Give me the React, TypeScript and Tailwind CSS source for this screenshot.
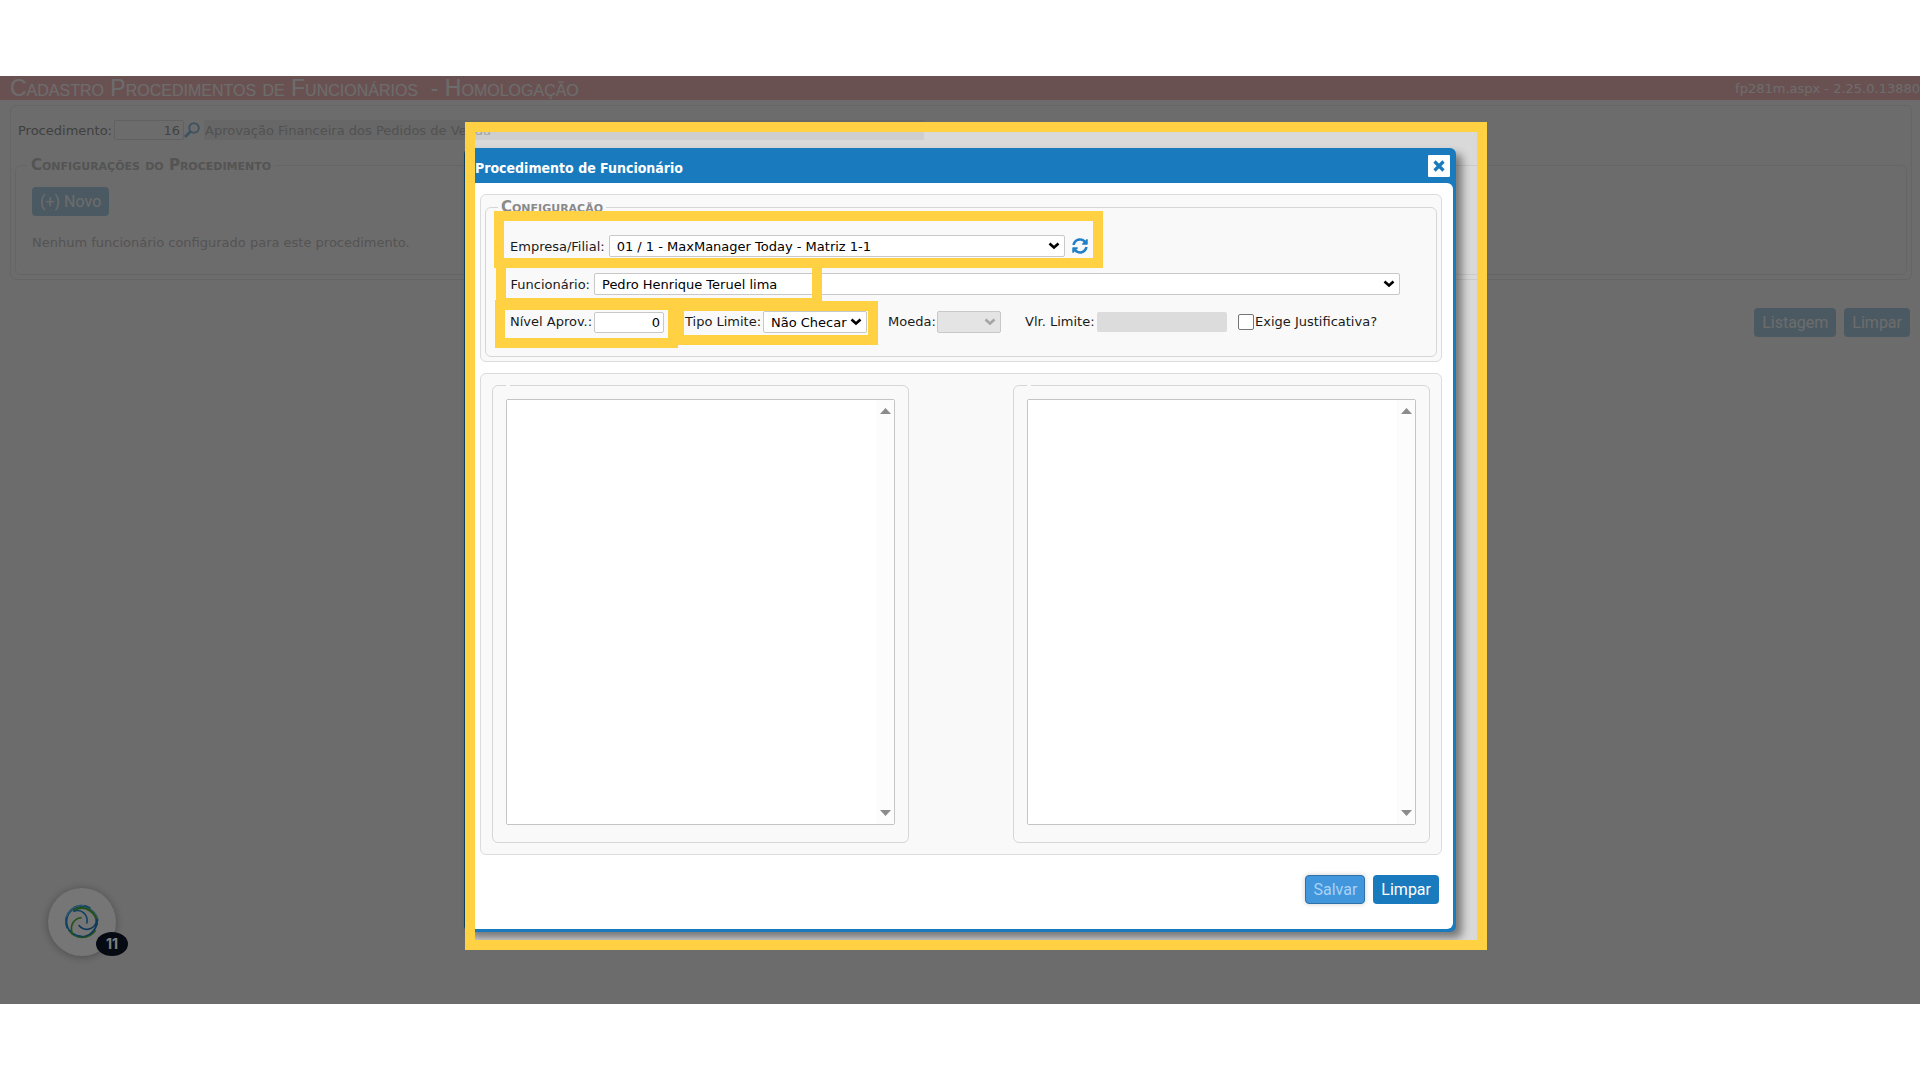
import type { ReactNode, SelectHTMLAttributes } from "react";

function Highlight({ className }: { className: string }) {
  return (
    <span
      aria-hidden="true"
      className={`pointer-events-none absolute border-10 border-[#ffd143] ${className}`}
    />
  );
}

type DropdownProps = SelectHTMLAttributes<HTMLSelectElement> & { box: string; text?: string };

function Dropdown({ box, text, disabled, ...rest }: DropdownProps) {
  return (
    <span className={`relative flex h-[22px] items-center ${box}`}>
      <select
        disabled={disabled}
        className="h-full w-full appearance-none rounded-xs border border-[#c8c8c8] bg-white pt-px pr-4 pl-[7px] text-black disabled:bg-[#e4e4e4]"
        {...rest}
      >
        <option>{text ?? ""}</option>
      </select>
      <svg
        viewBox="0 0 12 8"
        className={`pointer-events-none absolute right-[5px] h-2 w-3 ${disabled ? "text-[#a5a5a5]" : "text-black"}`}
        fill="none"
        stroke="currentColor"
        strokeWidth="2.6"
      >
        <path d="M1.500 1.500 6 5.500l4.500-4" />
      </svg>
    </span>
  );
}

function ListPanel({ label }: { label: string }) {
  return (
    <fieldset className="min-w-0 rounded-md border border-[#d6d6d6] px-[13px] pt-3 pb-[17px]">
      <legend className="h-1 w-1" />
      <div className="flex h-[426px] rounded-xs border border-[#c4c4c4] bg-white">
        <select multiple aria-label={label} className="min-w-0 flex-1 appearance-none bg-white" />
        <div className="flex w-[18px] flex-col items-center justify-between bg-[#fcfcfc] py-2 text-[#8b8b8b]">
          <svg viewBox="0 0 11 6" className="h-[6px] w-[11px]" fill="currentColor">
            <path d="M5.5 0 11 6H0z" />
          </svg>
          <svg viewBox="0 0 11 6" className="h-[6px] w-[11px]" fill="currentColor">
            <path d="M5.5 6 0 0h11z" />
          </svg>
        </div>
      </div>
    </fieldset>
  );
}

function FadedButton({ children }: { children: ReactNode }) {
  return (
    <button className="h-[29px] rounded-sm bg-[#b0d3e8] px-2 font-[Roboto,sans-serif] text-base leading-none text-white">
      {children}
    </button>
  );
}

function Background() {
  return (
    <div className="text-[#c6c6c6]">
      <header className="flex h-6 items-center justify-between bg-[#fabfbf] text-white">
        <h1 className="pl-[10px] font-['Liberation_Sans',sans-serif] text-[23px] leading-6 whitespace-pre [font-variant:small-caps]">
          {"Cadastro Procedimentos de Funcionários  - Homologação"}
        </h1>
        <span className="pt-0.5 text-[13px]">fp281m.aspx - 2.25.0.13880</span>
      </header>
      <section className="mt-[5px] mr-2 ml-[10px] rounded-md border border-[#eeeeee] px-1 pt-[14px] pb-1">
        <div className="flex h-5 items-center pl-[3px]">
          <label htmlFor="procedimento" className="w-24 pt-0.5 text-[#979797]">
            Procedimento:
          </label>
          <input
            id="procedimento"
            defaultValue="16"
            className="h-5 w-[70px] rounded-xs border border-[#e6e6e6] pr-[3px] text-right text-[#a0a0a0]"
          />
          <button aria-label="Pesquisar" className="h-4 w-4 text-[#93c3e2]">
            <svg viewBox="0 0 16 16" fill="none" stroke="currentColor" strokeWidth="2">
              <circle cx="10" cy="6" r="4.8" />
              <path d="M6.5 9.5 1 15" strokeWidth="2.8" />
            </svg>
          </button>
          <input
            readOnly
            aria-label="Descrição"
            defaultValue="Aprovação Financeira dos Pedidos de Venda"
            className="ml-1 h-5 w-[720px] bg-[#f3f3f3] pl-px text-[#c1c1c1]"
          />
        </div>
        <fieldset className="mt-[17px] rounded-md border border-[#eeeeee] px-4 pb-5">
          <legend className="-ml-[5px] px-1 text-[15px] leading-4 font-bold [font-variant:small-caps]">
            Configurações do Procedimento
          </legend>
          <div className="pt-[14px]">
            <FadedButton>(+) Novo</FadedButton>
          </div>
          <p className="mt-4 bg-white/30 leading-[22px]">
            Nenhum funcionário configurado para este procedimento.
          </p>
        </fieldset>
      </section>
      <div className="mt-[28px] flex justify-end gap-2 pr-[10px]">
        <FadedButton>Listagem</FadedButton>
        <FadedButton>Limpar</FadedButton>
      </div>
    </div>
  );
}

function AssistantBubble() {
  return (
    <button
      aria-label="Assistente, 11 mensagens"
      className="absolute bottom-12 left-12 flex h-17 w-17 items-center justify-center rounded-full bg-[#ececec] shadow-[0_1px_8px_rgba(0,0,0,0.3)]"
    >
      <svg viewBox="0 0 110 110" className="h-9 w-9" fill="none" strokeLinecap="round">
        <path d="M10 72A48 48 0 0 1 78 12" stroke="#1f86c4" strokeWidth="7" />
        <path d="M5 58A50 50 0 0 1 60 5" stroke="#7cc0e0" strokeWidth="3" />
        <path d="M32 18A46 46 0 0 1 100 62" stroke="#45a535" strokeWidth="7" />
        <path d="M62 8A50 50 0 0 1 105 50" stroke="#3f9fc8" strokeWidth="3" />
        <path d="M100 48A47 47 0 0 1 40 98" stroke="#1f6fb4" strokeWidth="6" />
        <path d="M96 82A50 50 0 0 1 14 80" stroke="#45a535" strokeWidth="4" />
        <path d="M8 42A46 46 0 0 0 50 98" stroke="#1f86c4" strokeWidth="5" />
        <path d="M26 92C16 66 30 44 52 42" stroke="#45a535" strokeWidth="5" />
        <path d="M30 22C54 14 74 32 70 58" stroke="#1f86c4" strokeWidth="5" />
        <path d="M46 66C60 84 88 80 98 58" stroke="#1f6fb4" strokeWidth="5" />
      </svg>
      <span className="absolute -right-3 bottom-0 flex h-6 w-8 items-center justify-center rounded-[50%] bg-[#0d1424] font-[Inter,sans-serif] text-sm font-bold text-white">
        11
      </span>
    </button>
  );
}

function Dialog() {
  return (
    <section
      role="dialog"
      aria-labelledby="dialog-title"
      className="relative mt-18 w-full max-w-[992px] self-start rounded-md border-3 border-[#197bbe] bg-[#197bbe] shadow-[6px_6px_8px_rgba(0,0,0,0.45)]"
    >
      <header className="flex h-8 items-center justify-between pr-[3px] pb-0.5 pl-2">
        <h2
          id="dialog-title"
          className="pt-1 font-['DejaVu_Sans_Condensed','DejaVu_Sans',sans-serif] text-sm font-bold text-white"
        >
          Procedimento de Funcionário
        </h2>
        <button
          aria-label="Fechar"
          className="flex h-[22px] w-[22px] items-center justify-center rounded-[1px] bg-white text-[#197bbe]"
        >
          <svg viewBox="0 0 12 12" className="h-3 w-3" stroke="currentColor" strokeWidth="3.2">
            <path d="m1.5 1.5 9 9M10.500 1.500l-9 9" />
          </svg>
        </button>
      </header>

      <div className="rounded-md bg-white pt-[11px] pr-[11px] pb-[25px] pl-[13px]">
        <div className="rounded-md border border-[#dcdcdc] bg-[#f9f9f9] p-1">
          <fieldset className="rounded-md border border-[#d6d6d6] pt-5 pb-[23px] pl-6">
            <legend className="-ml-3 px-[3px] text-[15px] leading-4 font-bold text-[#8a8a8a] [font-variant:small-caps]">
              Configuração
            </legend>
            <div className="flex flex-col gap-4">
              <div className="relative flex w-[578px] items-center">
                <label htmlFor="empresa" className="mr-1 pt-0.5 whitespace-nowrap">
                  Empresa/Filial:
                </label>
                <Dropdown id="empresa" box="flex-1" text="01 / 1 - MaxManager Today - Matriz 1-1" />
                <button aria-label="Atualizar" className="ml-[7px] h-4 w-4 text-[#1f80c8]">
                  <svg viewBox="0 0 512 512" fill="currentColor">
                    <path d="M370.720 133.280C339.458 104.008 298.888 87.962 255.848 88c-77.458.068-144.328 53.178-162.791 126.850-1.344 5.363-6.122 9.150-11.651 9.150H24.103c-7.498 0-13.194-6.807-11.807-14.176C33.933 94.924 134.813 8 256 8c66.448 0 126.791 26.136 171.315 68.685L463.030 40.970C478.149 25.851 504 36.559 504 57.941V192c0 13.255-10.745 24-24 24H345.941c-21.382 0-32.090-25.851-16.971-40.971l41.750-41.749zM32 296h134.059c21.382 0 32.090 25.851 16.971 40.971l-41.750 41.750c31.262 29.273 71.835 45.319 114.876 45.280 77.418-.070 144.315-53.144 162.787-126.849 1.344-5.363 6.122-9.150 11.651-9.150h57.304c7.498 0 13.194 6.807 11.807 14.176C478.067 417.076 377.187 504 256 504c-66.448 0-126.791-26.136-171.315-68.685L48.970 471.030C33.851 486.149 8 475.441 8 454.059V320c0-13.255 10.745-24 24-24z" />
                  </svg>
                </button>
                <Highlight className="-top-6 -right-[15px] -bottom-[11px] -left-4" />
              </div>

              <div className="relative flex w-[890px] items-center">
                <label htmlFor="funcionario" className="mr-1 w-20 pt-0.5 text-right">
                  Funcionário:
                </label>
                <Dropdown id="funcionario" box="flex-1" text="Pedro Henrique Teruel lima" />
                <Highlight className="-top-[15px] -bottom-[13px] -left-[14px] w-[326px]" />
              </div>

              <div className="flex items-center">
                <div className="relative flex items-center">
                  <label htmlFor="nivel" className="mr-1 w-20 text-right whitespace-nowrap">
                    Nível Aprov.:
                  </label>
                  <input
                    id="nivel"
                    defaultValue="0"
                    className="h-[21px] w-[70px] rounded-xs border border-[#c8c8c8] bg-white pr-[3px] text-right text-black"
                  />
                  <Highlight className="-top-3 -right-[14px] -bottom-[15px] -left-[15px]" />
                </div>
                <div className="relative ml-[21px] flex items-center">
                  <label htmlFor="tipo" className="w-[78px] whitespace-nowrap">
                    Tipo Limite:
                  </label>
                  <Dropdown id="tipo" box="w-[104px]" text="Não Checar" />
                  <Highlight className="-top-[10px] -right-[11px] -bottom-3 -left-[11px]" />
                </div>
                <label htmlFor="moeda" className="ml-[21px] w-[49px]">
                  Moeda:
                </label>
                <Dropdown id="moeda" box="w-16" disabled />
                <label htmlFor="valor" className="ml-6 w-18 whitespace-nowrap">
                  Vlr. Limite:
                </label>
                <input id="valor" disabled className="h-5 w-[130px] rounded-xs bg-[#dcdcdc]" />
                <label className="ml-[11px] flex items-center whitespace-nowrap">
                  <input
                    type="checkbox"
                    className="mr-px h-4 w-4 appearance-none rounded-xs border border-[#767676] bg-white"
                  />
                  Exige Justificativa?
                </label>
              </div>
            </div>
          </fieldset>
        </div>

        <div className="mt-[11px] grid grid-cols-2 gap-26 rounded-md border border-[#dcdcdc] bg-[#f9f9f9] px-[11px] pt-[9px] pb-[11px]">
          <ListPanel label="Disponíveis" />
          <ListPanel label="Selecionados" />
        </div>

        <div className="mt-5 flex justify-end gap-2 pr-[3px] font-[Roboto,sans-serif] text-base">
          <button
            disabled
            className="h-[29px] rounded-sm border border-[#2f72a8] bg-[#4296dc] px-[7px] leading-none text-[#a8d3f5] shadow-[0_0_5px_rgba(0,0,0,0.2)]"
          >
            Salvar
          </button>
          <button className="h-[29px] rounded-sm bg-[#197bbe] px-2 leading-none text-white">Limpar</button>
        </div>
      </div>

      <Highlight className="-top-[29px] -right-[34px] -bottom-[21px] -left-[2px] shadow-[0_0_0_2000px_rgba(0,0,0,0.5)]" />
    </section>
  );
}

export default function App() {
  return (
    <div className="flex min-h-screen flex-col bg-white py-19 font-['DejaVu_Sans',sans-serif] text-[13px] text-[#1a1a1a]">
      <main className="relative flex-1 overflow-hidden bg-white">
        <Background />
        <div className="absolute inset-0 bg-black/15" />
        <AssistantBubble />
        <div className="absolute inset-0 flex justify-center">
          <Dialog />
        </div>
      </main>
    </div>
  );
}
